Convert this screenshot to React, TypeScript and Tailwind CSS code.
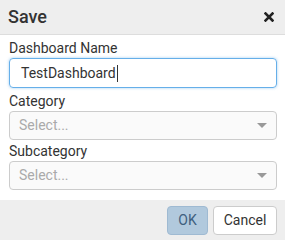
import React from 'react';

const Caret: React.FC = () => (
    <svg width="10" height="5" viewBox="0 0 10 5" className="shrink-0">
        <path d="M0 0 L10 0 L5 5 Z" fill="#999" />
    </svg>
);

const SelectBox: React.FC = () => (
    <div className="flex h-[29px] items-center justify-between rounded-[4px] border border-[#cccccc] bg-[#fafafa] pl-[9px] pr-[9px]">
        <span className="text-[14px] text-[#aaaaaa]">Select...</span>
        <Caret />
    </div>
);

export default function App() {
    return (
        <div className="flex h-[240px] w-[285px] flex-col bg-white font-['Roboto',sans-serif] text-[#333333]">
            <header className="flex h-[35px] shrink-0 items-center justify-between border-b border-[#dddddd] bg-[#eeeeee] pl-[8px] pr-[11px]">
                <h1 className="text-[18px] font-medium leading-none text-[#333333]">Save</h1>
                <svg width="10" height="10" viewBox="0 0 10 10">
                    <path d="M1.5 1.5 L8.5 8.5 M8.5 1.5 L1.5 8.5" stroke="#222" strokeWidth="2.6" strokeLinecap="square" />
                </svg>
            </header>
            <div className="flex flex-1 flex-col pl-[9px] pr-[8px] pt-[3px]">
                <label className="text-[14px] leading-[20px]">Dashboard Name</label>
                <div className="flex h-[30px] items-center rounded-[4px] border border-[#66afe9] pl-[11px] shadow-[0_0_3px_rgba(102,175,233,0.6)]">
                    <span className="text-[14px]">TestDashboard</span>
                    <span className="ml-[1px] h-[17px] w-px bg-[#333]" />
                </div>
                <label className="mt-[3px] text-[14px] leading-[20px]">Category</label>
                <SelectBox />
                <label className="mt-[1px] text-[14px] leading-[20px]">Subcategory</label>
                <SelectBox />
            </div>
            <footer className="flex h-[40px] shrink-0 items-center justify-end gap-[5px] bg-[#eeeeee] pr-[8px]">
                <button className="h-[29px] w-[41px] rounded-[4px] border border-[#9fbad2] bg-[#b1c9dd] text-[14px] text-[#3f607f]">OK</button>
                <button className="h-[29px] w-[64px] rounded-[4px] border border-[#cccccc] bg-white text-[14px] text-[#333333]">Cancel</button>
            </footer>
        </div>
    );
}
